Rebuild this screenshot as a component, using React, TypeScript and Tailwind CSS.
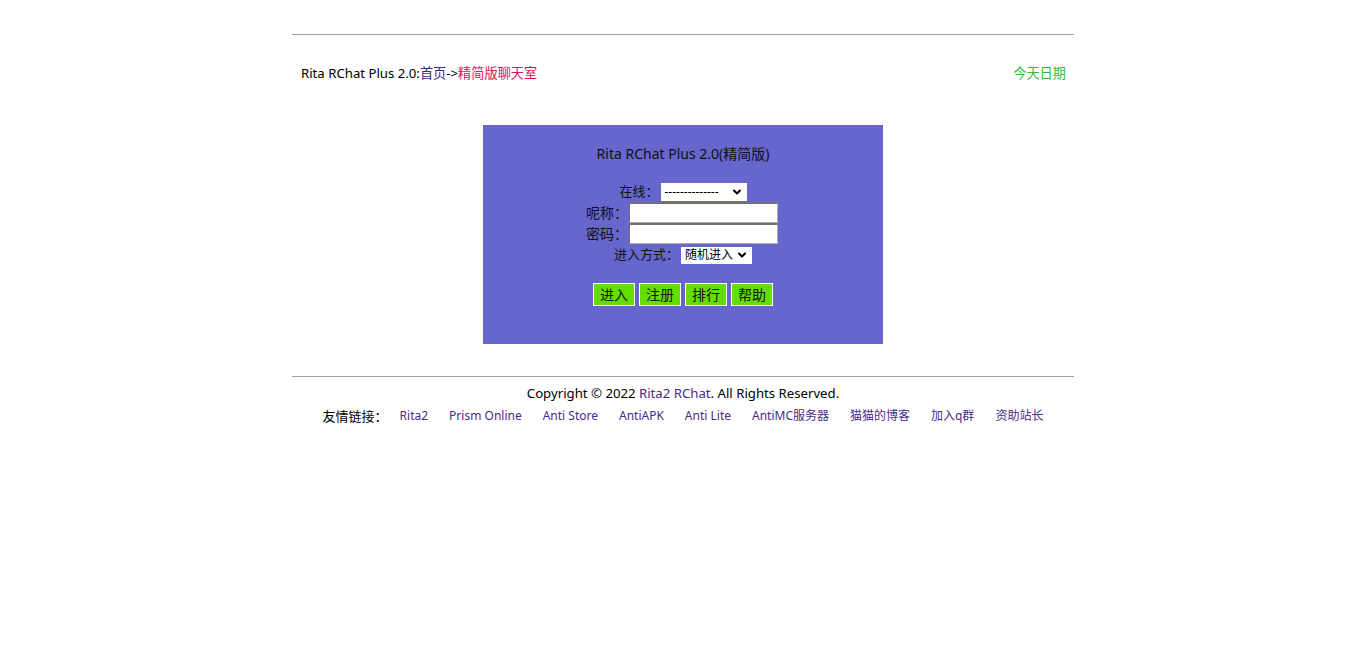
import { ChevronDown } from 'lucide-react';

const links = ['Rita2', 'Prism Online', 'Anti Store', 'AntiAPK', 'Anti Lite', 'AntiMC服务器', '猫猫的博客', '加入q群', '资助站长'];

function FakeSelect({ label, width, small }: { label: string; width: string; small?: boolean }) {
  return (
    <span className={`inline-flex items-center justify-between bg-white px-[4px] ${width} ${small ? 'h-[17px] text-[12px]' : 'h-[18px] text-[12px]'}`}>
      <span className="leading-none text-black">{label}</span>
      <ChevronDown size={12} strokeWidth={4} className="text-black" />
    </span>
  );
}

function TextBox() {
  return <span className="w-[149px] h-[21px] bg-white border border-[#aaa] border-t-2 border-t-[#707070] border-l-[#707070]" />;
}

export default function App() {
  const font = { fontFamily: '"Noto Sans", "Noto Sans CJK SC", sans-serif' };
  return (
    <div className="min-h-[663px] bg-white text-black text-[13px]" style={font}>
      <div className="w-[782px] mx-auto pt-[34px]">
        <hr className="border-0 border-t-[1.5px] border-[#a0a0a0]" />

        <div className="flex justify-between items-center h-[76px] pt-[1px] pl-[9px] pr-[8px] text-[13.2px]">
          <div>
            Rita RChat Plus 2.0:<span className="text-[#3b2b8f]">首页</span>-&gt;<span className="text-[#e3105b]">精简版聊天室</span>
          </div>
          <div className="text-[#33bb33]">今天日期</div>
        </div>

        <div className="w-[400px] h-[219px] mx-auto mt-[14px] bg-[#6666cc] flex flex-col items-center text-[#111]">
          <div className="mt-[19px] h-[20px] leading-[20px] text-[14px]">Rita RChat Plus 2.0(精简版)</div>

          <div className="mt-[18px] flex items-center gap-[2px] h-[19px]">
            <span>在线：</span>
            <FakeSelect label="--------------" width="w-[86px]" />
          </div>
          <div className="flex items-center gap-[1px] h-[21px] mt-[1px] text-[14px] -ml-[2px]">
            <span>呢称：</span>
            <TextBox />
          </div>
          <div className="flex items-center gap-[1px] h-[21px] text-[14px] -ml-[2px]">
            <span>密码：</span>
            <TextBox />
          </div>
          <div className="flex items-center gap-[2px] h-[20px] mt-[1px]">
            <span>进入方式：</span>
            <FakeSelect label="随机进入" width="w-[71px]" small />
          </div>

          <div className="mt-[18px] flex gap-[4px] text-[14px]">
            {['进入', '注册', '排行', '帮助'].map((b) => (
              <span key={b} className="w-[42px] h-[23px] flex items-center justify-center bg-[#66dd00] border border-white text-[#111]">
                {b}
              </span>
            ))}
          </div>
        </div>

        <hr className="mt-[32px] border-0 border-t-[1.5px] border-[#a0a0a0]" />

        <div className="text-center mt-[6px] leading-[20px] text-[13.2px]">
          Copyright © 2022 <span className="text-[#4b2a8a]">Rita2 RChat</span>. All Rights Reserved.
        </div>
        <div className="flex justify-center items-center gap-[21px] mt-[3px] text-[12px] leading-[20px]">
          <span className="text-black text-[13px] -mr-[9px]">友情链接：</span>
          {links.map((l) => (
            <span key={l} className="text-[#4b2a8a]">{l}</span>
          ))}
        </div>
      </div>
    </div>
  );
}
